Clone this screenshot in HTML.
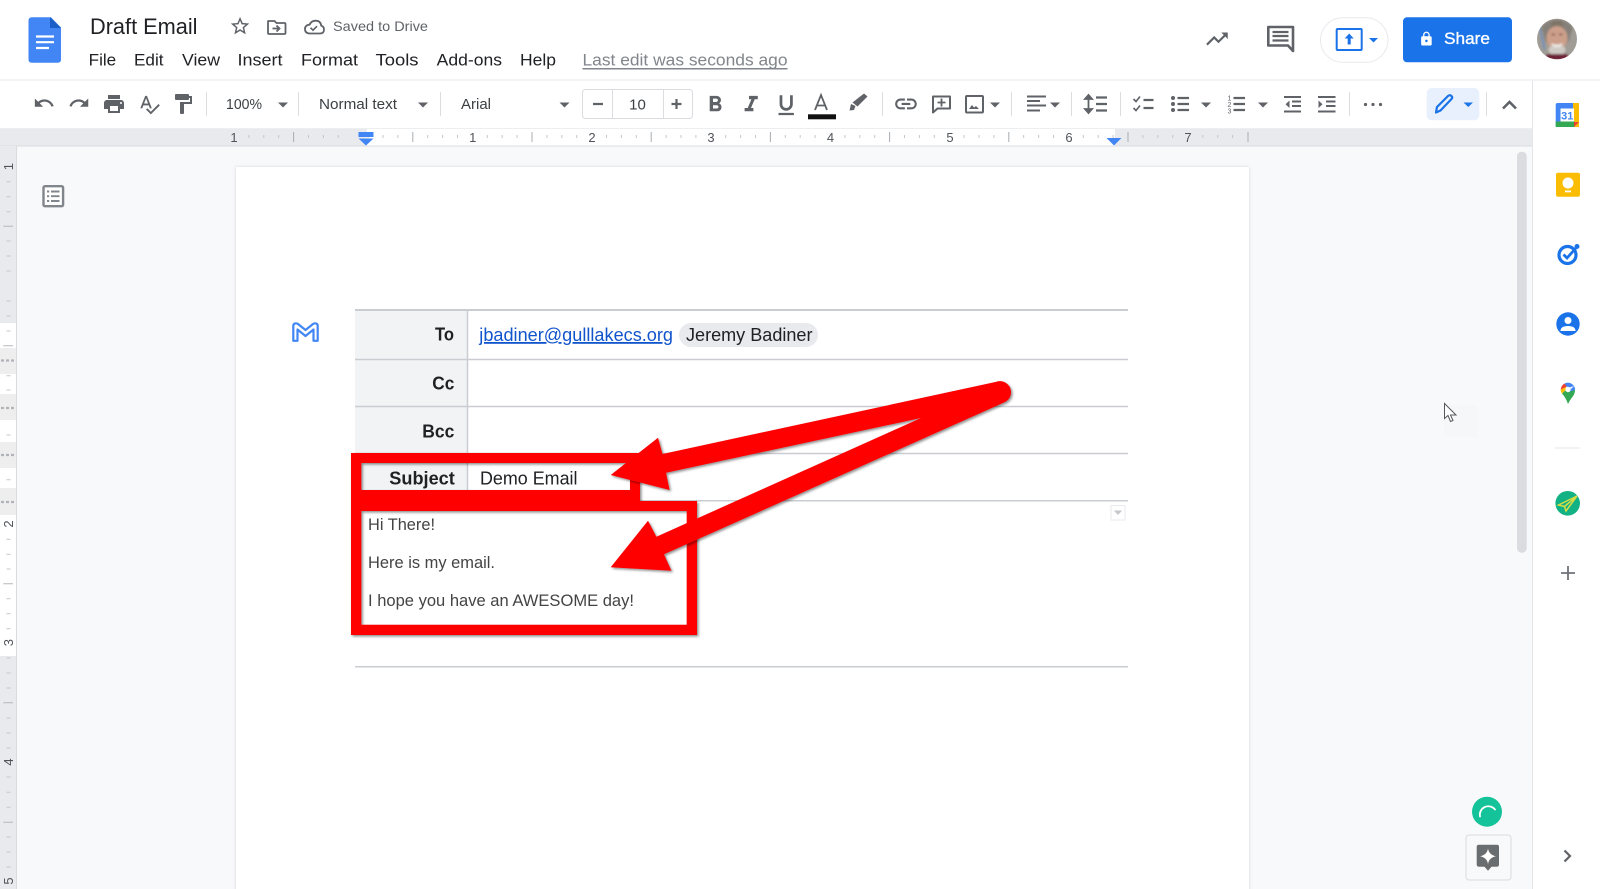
<!DOCTYPE html>
<html lang="en">
<head>
<meta charset="utf-8">
<title>Draft Email</title>
<style>
html,body{margin:0;padding:0;background:#fff;width:1600px;height:889px;overflow:hidden}
svg{display:block;font-family:"Liberation Sans",Arial,sans-serif;filter:blur(.3px)}
.g{fill:#5f6368}
.d{fill:#474a4d}
.s{stroke:#dadce0;stroke-width:1;fill:none}
.m{font-size:17px;fill:#202124}
.t{font-size:14.5px;fill:#3c4043}
.l{font-size:18px;font-weight:bold;fill:#202124}
.b{font-size:16.5px;fill:#444}
.r{font-size:13px;fill:#50545a;text-anchor:middle}
</style>
</head>
<body>
<svg width="1600" height="889" viewBox="0 0 1600 889" xmlns="http://www.w3.org/2000/svg">
<defs>
<filter id="sh" x="-5%" y="-5%" width="110%" height="110%"><feDropShadow dx="1.5" dy="1.5" stdDeviation="1.2" flood-color="#000" flood-opacity=".45"/></filter>
<filter id="ps" x="-3%" y="-3%" width="106%" height="106%"><feDropShadow dx="0" dy="0" stdDeviation="1.5" flood-color="#000" flood-opacity=".14"/></filter>
<filter id="sf"><feGaussianBlur stdDeviation="1"/></filter>
<clipPath id="av"><ellipse cx="1557" cy="39" rx="20" ry="20.300"/></clipPath>
<g id="inch">
<path d="M14.900 135v3M29.800 135v3M44.700 135v3M74.500 135v3M89.400 135v3M104.300 135v3" stroke="#c4c7cb" stroke-width="1"/>
<path d="M59.600 132v10" stroke="#a8acb1" stroke-width="1"/>
</g>
<path id="caret" d="M-5 -2.500h10l-5 5z"/>
</defs>

<!-- backgrounds -->
<rect width="1600" height="889" fill="#fff"/>
<rect x="0" y="146" width="1532" height="743" fill="#f8f9fa"/>
<rect x="0" y="79" width="1600" height="2" fill="#f1f3f4"/>

<!-- horizontal ruler -->
<rect x="0" y="128" width="1532" height="18" fill="#e8eaed"/>
<rect x="367" y="128" width="748" height="18" fill="#fff"/>
<rect x="0" y="145.500" width="1532" height="1" fill="#dadce0"/>
<rect x="0" y="128" width="1532" height="1" fill="#eceef0"/>
<use href="#inch" x="234"/><use href="#inch" x="353.200"/><use href="#inch" x="472.400"/><use href="#inch" x="591.600"/><use href="#inch" x="710.800"/><use href="#inch" x="830"/><use href="#inch" x="949.200"/><use href="#inch" x="1068.400"/>
<path d="M1202.800 135v3M1217.700 135v3M1232.600 135v3" stroke="#c4c7cb"/>
<path d="M1248 132v10" stroke="#a8acb1"/>
<text class="r" x="234" y="142">1</text>
<text class="r" x="472.700" y="142">1</text>
<text class="r" x="592" y="142">2</text>
<text class="r" x="711" y="142">3</text>
<text class="r" x="830.500" y="142">4</text>
<text class="r" x="950" y="142">5</text>
<text class="r" x="1069" y="142">6</text>
<text class="r" x="1188" y="142">7</text>
<path d="M358.500 132h15v5h-15z" fill="#4285f4"/>
<path d="M358.500 138.500h15l-7.500 7z" fill="#4285f4"/>
<path d="M1106.500 138h15l-7.500 7.500z" fill="#4285f4"/>

<!-- vertical ruler -->
<rect x="0" y="146" width="16.500" height="743" fill="#e8eaed"/>
<rect x="0" y="323" width="16.500" height="333" fill="#fff"/>
<rect x="16" y="146" width="1" height="743" fill="#dadce0"/>
<g fill="#eeeeee">
<rect x="0" y="348" width="16" height="26"/>
<rect x="0" y="394" width="16" height="26"/>
<rect x="0" y="442" width="16" height="26"/>
<rect x="0" y="488" width="16" height="27"/>
</g>
<path d="M1 360.500h3M6 360.500h3M11 360.500h3M1 408h3M6 408h3M11 408h3M1 455h3M6 455h3M11 455h3M1 502h3M6 502h3M11 502h3" stroke="#b0b3b7" stroke-width="2.200"/>
<path d="M6.500 181.700h4M6.500 196.700h4M6.500 211.700h4M6.500 241h4M6.500 256h4M6.500 271h4M6.500 301h4M6.500 316h4M6.500 331h4M6.500 375.700h4M6.500 390h4M6.500 435h4M6.500 479.700h4M6.500 539.300h4M6.500 554.300h4M6.500 569h4M6.500 598.700h4M6.500 613.700h4M6.500 628.700h4M6.500 658h4M6.500 673h4M6.500 688h4M6.500 718h4M6.500 733h4M6.500 748h4M6.500 777h4M6.500 792.300h4M6.500 807.300h4M6.500 837h4M6.500 852h4M6.500 867h4" stroke="#c4c7cb"/>
<path d="M3.300 226.300h9.700M3.300 345.700h9.700M3.300 583.700h9.700M3.300 702.700h9.700M3.300 822.300h9.700" stroke="#b4b8bd"/>
<g class="r">
<text class="r" transform="translate(13 166.700) rotate(-90)">1</text>
<text class="r" transform="translate(13 524) rotate(-90)">2</text>
<text class="r" transform="translate(13 642.700) rotate(-90)">3</text>
<text class="r" transform="translate(13 762) rotate(-90)">4</text>
<text class="r" transform="translate(13 881) rotate(-90)">5</text>
</g>

<!-- outline icon -->
<rect x="43.500" y="186.200" width="19.600" height="20" rx="1.500" fill="#fff" stroke="#80868b" stroke-width="2.400"/>
<path d="M47 191.500h2.200M51 191.500h8.500M47 196.200h2.200M51 196.200h8.500M47 201h2.200M51 201h8.500" stroke="#80868b" stroke-width="1.900"/>

<!-- page -->
<rect x="236" y="167" width="1013" height="730" fill="#fff" filter="url(#ps)"/>

<!-- gmail M -->
<path d="M293.300 340.800V326Q293.300 323.300 296 323.300Q297 323.300 298 324L305.500 330L313 324Q314 323.300 315 323.300Q317.700 323.300 317.700 326V340.800H313.500V329.500L305.500 336L297.500 329.500V340.800Z" fill="none" stroke="#4285f4" stroke-width="2.200" stroke-linejoin="round"/>

<!-- table -->
<rect x="355" y="310" width="112" height="190" fill="#f1f3f4"/>
<g stroke="#c9ccd1" stroke-width="1.500" fill="none">
<path d="M355 310h773" stroke-width="2"/>
<path d="M355 359.500h773M355 406.500h773M355 453.500h773M355 500.700h773M355 666.700h773"/>
<path d="M467.500 310v190.700"/>
</g>
<text class="l" x="435" y="340.500" textLength="19" lengthAdjust="spacingAndGlyphs">To</text>
<text class="l" x="432.300" y="389.300" textLength="22" lengthAdjust="spacingAndGlyphs">Cc</text>
<text class="l" x="422.300" y="437.700" textLength="32" lengthAdjust="spacingAndGlyphs">Bcc</text>
<text class="l" x="389.300" y="484.500" textLength="65.500" lengthAdjust="spacingAndGlyphs">Subject</text>
<text x="479.300" y="341" font-size="18" fill="#1155cc" text-decoration="underline" textLength="193.700" lengthAdjust="spacingAndGlyphs">jbadiner@gulllakecs.org</text>
<rect x="679" y="323" width="139" height="24" rx="12" fill="#e8eaed"/>
<text x="686" y="341" font-size="18" fill="#202124" textLength="126.500" lengthAdjust="spacingAndGlyphs">Jeremy Badiner</text>
<text x="480" y="484.500" font-size="18" fill="#202124" textLength="97.500" lengthAdjust="spacingAndGlyphs">Demo Email</text>
<text class="b" x="368" y="530" textLength="67" lengthAdjust="spacingAndGlyphs">Hi There!</text>
<text class="b" x="368" y="568" textLength="127" lengthAdjust="spacingAndGlyphs">Here is my email.</text>
<text class="b" x="368" y="606" textLength="266" lengthAdjust="spacingAndGlyphs">I hope you have an AWESOME day!</text>
<rect x="1111" y="505.500" width="14" height="14.500" fill="#fff" stroke="#e8eaed"/>
<path d="M1113.800 510.500h8.400l-4.200 4.500z" fill="#c4c7cb"/>

<!-- red frames and arrows -->
<path filter="url(#sh)" fill="#ff0000" fill-rule="evenodd" d="M351 453H640V501H697V635H351ZM361.300 463V490H630V463ZM361.300 511V624.700H686.700V511Z"/>
<path filter="url(#sh)" fill="#ff0000" d="M996 381.900L662.500 454L658 437.700L610.700 475L669.600 490L666 472.700L921 418L656.400 536.700L648 520.700L610.700 567.300L671.400 570.700L664 554.300L1004 402.500A11 11 0 0 0 996 381.900Z"/>

<!-- header -->
<path d="M32 17.200H51L61 27.500V59.500Q61 62.700 57.800 62.700H31.800Q28.500 62.700 28.500 59.500V20.500Q28.500 17.200 32 17.200Z" fill="#4285f4"/>
<path d="M50 17.200L61 28H50Z" fill="#1a5fc8"/>
<path d="M36 36.500h18M36 42.200h18M36 48h13" stroke="#fff" stroke-width="2.200" fill="none"/>
<text x="90" y="34" font-size="22" fill="#202124" textLength="107.500" lengthAdjust="spacingAndGlyphs">Draft Email</text>
<path transform="translate(229 15) scale(.92)" class="g" d="M22 9.240l-7.190-.62L12 2 9.190 8.630 2 9.240l5.460 4.730L5.820 21 12 17.270 18.180 21l-1.630-7.030L22 9.240zM12 15.400l-3.760 2.270 1-4.280-3.320-2.880 4.380-.38L12 6.100l1.710 4.040 4.380.38-3.320 2.880 1 4.280L12 15.400z"/>
<path d="M268.200 21H274.500L276.500 23H284.500Q285.500 23 285.500 24V33Q285.500 34 284.500 34H269Q268 34 268 33V21.500Z" fill="none" stroke="#5f6368" stroke-width="1.800"/>
<path d="M272.500 28.500h6M276.500 25.500l3 3-3 3" fill="none" stroke="#5f6368" stroke-width="1.800"/>
<path d="M310 33.500Q305 33.500 305 29Q305 25 309.500 24.700Q311.500 20.700 315.500 20.700Q320.500 20.700 321.300 25.700Q324 26.500 324 29.500Q324 33.500 320 33.500Z" fill="none" stroke="#5f6368" stroke-width="1.800"/>
<path d="M310.500 27.700l2.500 2.500 4-4" fill="none" stroke="#5f6368" stroke-width="1.600"/>
<text x="333" y="31" font-size="14" fill="#5f6368" textLength="95" lengthAdjust="spacingAndGlyphs">Saved to Drive</text>

<text class="m" x="88.700" y="65.500" textLength="27.500" lengthAdjust="spacingAndGlyphs">File</text>
<text class="m" x="134" y="65.500" textLength="29.500" lengthAdjust="spacingAndGlyphs">Edit</text>
<text class="m" x="182" y="65.500" textLength="38" lengthAdjust="spacingAndGlyphs">View</text>
<text class="m" x="237.500" y="65.500" textLength="45" lengthAdjust="spacingAndGlyphs">Insert</text>
<text class="m" x="301" y="65.500" textLength="57" lengthAdjust="spacingAndGlyphs">Format</text>
<text class="m" x="375.500" y="65.500" textLength="43" lengthAdjust="spacingAndGlyphs">Tools</text>
<text class="m" x="436.700" y="65.500" textLength="65.300" lengthAdjust="spacingAndGlyphs">Add-ons</text>
<text class="m" x="520" y="65.500" textLength="36" lengthAdjust="spacingAndGlyphs">Help</text>
<text x="582.500" y="65.500" font-size="17" fill="#80868b" textLength="205" lengthAdjust="spacingAndGlyphs">Last edit was seconds ago</text>
<rect x="582.500" y="68" width="205" height="1.500" fill="#80868b"/>

<!-- header right -->
<path transform="translate(1204 26) scale(1.080)" fill="#5f6368" d="M16 6l2.290 2.290-4.880 4.880-4-4L2 16.590 3.410 18l6-6 4 4 6.300-6.290L22 12V6z"/>
<path d="M1268.300 27H1293V51L1288 45.500H1268.300Z" fill="none" stroke="#5f6368" stroke-width="2.600" stroke-linejoin="round"/>
<path d="M1272.500 32h16M1272.500 36h16M1272.500 40.500h16" stroke="#5f6368" stroke-width="2.200"/>
<rect x="1320.500" y="17.800" width="67.500" height="44.500" rx="22.200" fill="#fff" stroke="#e8eaed"/>
<rect x="1336.700" y="29" width="25" height="21" rx="1" fill="#fff" stroke="#1a73e8" stroke-width="2"/>
<path d="M1349.200 33.500l4.500 5h-3v6h-3v-6h-3z" fill="#1a73e8"/>
<path d="M1369 38h9l-4.500 4.500z" fill="#1a73e8"/>
<rect x="1403" y="17.300" width="109" height="45" rx="4" fill="#1a73e8"/>
<path transform="translate(1418.500 31) scale(.66)" fill="#fff" d="M18 8h-1V6c0-2.760-2.240-5-5-5S7 3.240 7 6v2H6c-1.100 0-2 .9-2 2v10c0 1.100.9 2 2 2h12c1.100 0 2-.9 2-2V10c0-1.100-.9-2-2-2zm-6 9c-1.100 0-2-.9-2-2s.9-2 2-2 2 .9 2 2-.9 2-2 2zm3.100-9H8.900V6c0-1.710 1.390-3.100 3.100-3.100 1.710 0 3.100 1.390 3.100 3.100v2z"/>
<text x="1444" y="44" font-size="17" fill="#fff" stroke="#fff" stroke-width=".35" textLength="46" lengthAdjust="spacingAndGlyphs">Share</text>
<g clip-path="url(#av)">
<rect x="1537" y="18" width="40" height="42" fill="#a09c96"/>
<path d="M1540 28L1545 50" stroke="#6f8fc0" stroke-width="2" filter="url(#sf)"/>
<g filter="url(#sf)">
<ellipse cx="1557" cy="29" rx="15" ry="9" fill="#7d7568"/>
<path d="M1543 30Q1543 22 1552 21L1547 44Q1543 38 1543 30ZM1571 30Q1571 22 1562 21L1567 44Q1571 38 1571 30Z" fill="#85807a"/>
<ellipse cx="1557" cy="38" rx="10.500" ry="12" fill="#cc9f8a"/>
<ellipse cx="1557" cy="50" rx="8.500" ry="5.500" fill="#cfcac4"/>
<path d="M1551 43q6 3.500 12 0q-1.500 4-6 4t-6-4z" fill="#f5f1ec"/>
<path d="M1551.500 34.500h3.500M1559 34.500h3.500" stroke="#5a4538" stroke-width="1.300"/>
<path d="M1543 60L1548 54L1566 54L1571 60Z" fill="#6e2234"/>
</g>
</g>

<!-- toolbar icons -->
<path transform="translate(33 92) scale(.92)" class="g" d="M12.500 8c-2.650 0-5.050.99-6.900 2.600L2 7v9h9l-3.620-3.620c1.390-1.160 3.160-1.880 5.120-1.880 3.540 0 6.550 2.310 7.600 5.500l2.370-.78C21.080 11.030 17.150 8 12.500 8z"/>
<path transform="translate(68 92) scale(.92)" class="g" d="M18.400 10.600C16.550 8.990 14.150 8 11.500 8c-4.650 0-8.580 3.030-9.960 7.220L3.900 16c1.050-3.190 4.050-5.500 7.600-5.500 1.950 0 3.730.72 5.120 1.880L13 16h9V7l-3.600 3.600z"/>
<path transform="translate(102 92) scale(1)" class="g" d="M19 8H5c-1.660 0-3 1.340-3 3v6h4v4h12v-4h4v-6c0-1.660-1.340-3-3-3zm-3 11H8v-5h8v5zm3-7c-.55 0-1-.45-1-1s.45-1 1-1 1 .45 1 1-.45 1-1 1zm-1-9H6v4h12V3z"/>
<path transform="translate(138 93) scale(.95)" class="g" d="M12.450 16h2.090L9.430 3H7.570L2.460 16h2.090l1.120-3h5.640l1.140 3zm-6.020-5L8.500 5.480 10.570 11H6.430zm15.160.59l-8.090 8.090L9.830 16l-1.410 1.410 5.090 5.090L23 13l-1.410-1.410z"/>
<path transform="translate(171 92) scale(1)" class="g" d="M18 4V3c0-.55-.45-1-1-1H5c-.55 0-1 .45-1 1v4c0 .55.45 1 1 1h12c.55 0 1-.45 1-1V6h1v4H9v11c0 .55.45 1 1 1h2c.55 0 1-.45 1-1v-9h8V4h-3z"/>
<path class="s" d="M206.500 92v24M298.500 92v24M440.500 92v24M882.500 92v24M1011.500 92v24M1071.500 92v24M1120.500 92v24M1349.500 92v24M1486.500 92v24"/>
<text class="t" x="226" y="109" textLength="36" lengthAdjust="spacingAndGlyphs">100%</text>
<use href="#caret" x="283" y="105" class="g"/>
<text class="t" x="319" y="109" textLength="78" lengthAdjust="spacingAndGlyphs">Normal text</text>
<use href="#caret" x="423" y="105" class="g"/>
<text class="t" x="461" y="109" textLength="30" lengthAdjust="spacingAndGlyphs">Arial</text>
<use href="#caret" x="564.500" y="105" class="g"/>
<rect x="582.500" y="89.500" width="110" height="29" rx="3" fill="#fff" stroke="#dadce0"/>
<path class="s" d="M612.500 90v28M663.500 90v28"/>
<path d="M593 104h10M671.500 104h10M676.500 99v10" stroke="#5f6368" stroke-width="2.200"/>
<text x="637.500" y="109.500" font-size="15" fill="#3c4043" text-anchor="middle">10</text>
<path transform="translate(702 91.500) scale(1.100)" class="g" d="M15.600 10.790c.97-.67 1.650-1.770 1.650-2.790 0-2.260-1.750-4-4-4H7v14h7.040c2.090 0 3.710-1.700 3.710-3.790 0-1.520-.86-2.820-2.150-3.420zM10 6.500h3c.83 0 1.500.67 1.500 1.500s-.67 1.500-1.500 1.500h-3v-3zm3.500 9H10v-3h3.500c.83 0 1.500.67 1.500 1.500s-.67 1.500-1.500 1.500z"/>
<path transform="translate(738 91.500) scale(1.100)" class="g" d="M10 4v3h2.210l-3.420 8H6v3h8v-3h-2.210l3.420-8H18V4z"/>
<path transform="translate(773 92) scale(1.100)" class="g" d="M12 17c3.310 0 6-2.690 6-6V3h-2.500v8c0 1.930-1.570 3.500-3.500 3.500S8.500 12.930 8.500 11V3H6v8c0 3.310 2.690 6 6 6zm-7 2v2h14v-2H5z"/>
<path d="M815 110L821 95L827 110M817 105.500h8" fill="none" stroke="#5f6368" stroke-width="1.800"/>
<rect x="808" y="114.300" width="28" height="5" fill="#111"/>
<path d="M849.500 110.500L854 110L855.500 106L851 104L849.500 110.500ZM852.500 102.500L857.500 106.500L867.500 96.500L864 93.500Z" fill="#5f6368"/>
<path transform="translate(893 91) scale(1.080)" class="g" d="M3.900 12c0-1.710 1.390-3.100 3.100-3.100h4V7H7c-2.760 0-5 2.240-5 5s2.240 5 5 5h4v-1.900H7c-1.710 0-3.100-1.390-3.100-3.100zM8 13h8v-2H8v2zm9-6h-4v1.900h4c1.710 0 3.100 1.390 3.100 3.100s-1.390 3.100-3.100 3.100h-4V17h4c2.760 0 5-2.240 5-5s-2.240-5-5-5z"/>
<path d="M933 96.500H950V108.500H937.500L933 112.500Z" fill="none" stroke="#5f6368" stroke-width="2" stroke-linejoin="round"/>
<path d="M941.500 98.500v8M937.500 102.500h8" stroke="#5f6368" stroke-width="1.800"/>
<rect x="966" y="96" width="17" height="16.500" rx="1" fill="none" stroke="#5f6368" stroke-width="2"/>
<path d="M969 109l3-4 2 2.500 2-1.500 3 3z" class="g"/>
<use href="#caret" x="995" y="105" class="g"/>
<path d="M1027 96.500h19M1027 101h13M1027 105.500h19M1027 110.500h13" stroke="#5f6368" stroke-width="2"/>
<use href="#caret" x="1055" y="105" class="g"/>
<path d="M1088.500 98v12M1085 99l3.500-4 3.500 4zM1085 109l3.500 4 3.500-4z" stroke="#5f6368" stroke-width="1.800" fill="#5f6368"/>
<path d="M1096 97.500h11M1096 104h11M1096 110.500h11" stroke="#5f6368" stroke-width="2.200"/>
<path d="M1133.500 99l2.500 2.500 4-5M1133.500 108l2.500 2.500 4-5" fill="none" stroke="#5f6368" stroke-width="1.600"/>
<path d="M1143.500 100h10M1143.500 108h10" stroke="#5f6368" stroke-width="2.200"/>
<circle cx="1173" cy="98" r="2" class="g"/><circle cx="1173" cy="104" r="2" class="g"/><circle cx="1173" cy="110" r="2" class="g"/>
<path d="M1177.500 98h11.500M1177.500 104h11.500M1177.500 110h11.500" stroke="#5f6368" stroke-width="2.200"/>
<use href="#caret" x="1206" y="105" class="g"/>
<text x="1227.500" y="100.500" font-size="7" fill="#5f6368">1</text><text x="1227.500" y="107" font-size="7" fill="#5f6368">2</text><text x="1227.500" y="113.500" font-size="7" fill="#5f6368">3</text>
<path d="M1233.500 98h11.500M1233.500 104h11.500M1233.500 110h11.500" stroke="#5f6368" stroke-width="2.200"/>
<use href="#caret" x="1263" y="105" class="g"/>
<path d="M1284 97h17M1292 101.500h9M1292 106h9M1284 111.500h17" stroke="#5f6368" stroke-width="2"/>
<path d="M1289.500 100.500v7.500l-4-3.700z" class="g"/>
<path d="M1318 97h17.500M1326 101.500h9.500M1326 106h9.500M1318 111.500h17.500" stroke="#5f6368" stroke-width="2"/>
<path d="M1318.500 100.500v7.500l4-3.700z" class="g"/>
<circle cx="1365.500" cy="104.500" r="1.600" class="g"/><circle cx="1373" cy="104.500" r="1.600" class="g"/><circle cx="1380.500" cy="104.500" r="1.600" class="g"/>
<rect x="1426.700" y="88" width="52.600" height="32.300" rx="5" fill="#e8f0fe"/>
<path d="M1436 112.500L1437 107L1448 96Q1450 94.500 1451.500 96Q1453 97.500 1451.500 99L1440.500 110.500Z" fill="none" stroke="#1a73e8" stroke-width="2.200" stroke-linejoin="round"/>
<path d="M1463.500 102.500h9.500l-4.700 4.500z" fill="#1a73e8"/>
<path d="M1503 108.500l6.500-6.500 6.500 6.500" fill="none" stroke="#5f6368" stroke-width="2.600"/>

<!-- side panel -->
<rect x="1532" y="81" width="1" height="808" fill="#e3e5e8"/>
<rect x="1517" y="151.700" width="9.700" height="401" rx="4.500" fill="#dadce0"/>
<!-- calendar -->
<rect x="1555.700" y="103" width="23.300" height="24" rx="2" fill="#4285f4"/>
<rect x="1573" y="103" width="6" height="24" fill="#fbbc04"/>
<rect x="1555.700" y="121.500" width="19" height="5.500" fill="#34a853"/>
<path d="M1574 122h5l-5 5z" fill="#ea4335"/>
<rect x="1560.500" y="108.500" width="13.500" height="13" fill="#fff"/>
<text x="1567.300" y="119.500" font-size="11" font-weight="bold" fill="#4285f4" text-anchor="middle">31</text>
<!-- keep -->
<rect x="1556" y="172.700" width="24" height="24" rx="2" fill="#fbbc04"/>
<circle cx="1568" cy="183" r="5.500" fill="#fff"/>
<rect x="1565" y="190.500" width="6" height="1.800" fill="#fff"/>
<!-- tasks -->
<circle cx="1567.500" cy="255" r="8.500" fill="none" stroke="#1a73e8" stroke-width="3.200"/>
<path d="M1563.500 254.500l3.500 3.500 9-10" fill="none" stroke="#1a73e8" stroke-width="2.800"/>
<circle cx="1577" cy="246.500" r="2.500" fill="#1a73e8"/>
<!-- contacts -->
<circle cx="1568" cy="324" r="11.700" fill="#1a73e8"/>
<circle cx="1568" cy="320.500" r="3.500" fill="#fff"/>
<path d="M1560.500 331q0-5 7.500-5t7.500 5z" fill="#fff"/>
<!-- maps -->
<path d="M1568 404Q1566 398 1562 393.500L1568 388L1575 390Q1575 394 1572 397.500Q1569.500 400.500 1568 404Z" fill="#34a853"/>
<path d="M1562 393.500Q1560.500 391.500 1560.700 389.500L1565 386.500L1568 388Z" fill="#fbbc04"/>
<path d="M1560.700 389.500Q1561.500 385 1564.500 383.500L1568 386Z" fill="#ea4335"/>
<path d="M1564.500 383.500Q1570 381 1574 386L1568 388Z" fill="#4285f4"/>
<path d="M1574 386Q1575.300 388 1575 390L1568 392Z" fill="#4285f4"/>
<circle cx="1568" cy="389.500" r="2.700" fill="#fff"/>
<rect x="1555" y="447.500" width="25" height="1" fill="#e3e5e8"/>
<!-- green -->
<circle cx="1567.700" cy="503.300" r="12.300" fill="#12b284"/>
<path d="M1558.500 505L1577 496L1566 511L1564.500 506.500ZM1564.500 506.500L1577 496" fill="none" stroke="#d6dd44" stroke-width="1.500"/>
<path d="M1561 573h14M1568 566v14" stroke="#6f7378" stroke-width="1.800"/>
<!-- cursor -->
<rect x="1444" y="405" width="34" height="32" fill="#f6f7f9"/>
<path d="M1444.500 403.500V418.500L1448 415.500L1450.500 421.500L1453 420.500L1450.500 415H1456Z" fill="#fff" stroke="#55585c" stroke-width="1"/>
<!-- grammarly -->
<circle cx="1487" cy="811.700" r="15" fill="#15c39a"/>
<path d="M1480 816.500A8.500 8.500 0 0 1 1495 809.500" fill="none" stroke="#fff" stroke-width="1.800" stroke-linecap="round"/>
<!-- explore -->
<rect x="1466" y="835" width="45" height="45" rx="3" fill="#f8f9fa" stroke="#dadce0"/>
<path d="M1479 844.700H1497Q1499 844.700 1499 846.700V864.500Q1499 866.700 1497 866.700H1491.500L1488 870.700L1484.500 866.700H1479Q1476.700 866.700 1476.700 864.500V846.700Q1476.700 844.700 1479 844.700Z" fill="#6a6d70"/>
<path d="M1488 848.500Q1489 855 1496 856.200Q1489 857.500 1488 864Q1487 857.500 1480 856.200Q1487 855 1488 848.500Z" fill="#fff"/>
<path d="M1564.500 850.500l5.500 5.500-5.500 5.500" fill="none" stroke="#5f6368" stroke-width="2.200"/>
</svg>
</body>
</html>
